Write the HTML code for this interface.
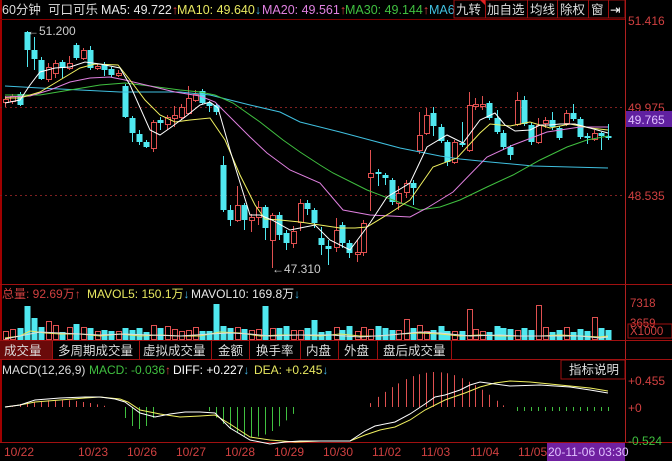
<!DOCTYPE html><html><head><meta charset="utf-8"><style>
body{margin:0;background:#000;width:672px;height:461px;overflow:hidden;font-family:"Liberation Sans","Noto Sans CJK SC",sans-serif}
svg{position:absolute;left:0;top:0}
</style></head><body>
<svg id="s" width="672" height="461" xmlns="http://www.w3.org/2000/svg" font-family="Liberation Sans, Noto Sans CJK SC, sans-serif">
<rect width="672" height="461" fill="#000"/>
<line x1="1" y1="0" x2="1" y2="443" stroke="#a00000" stroke-width="2"/>
<line x1="625.5" y1="0" x2="625.5" y2="443" stroke="#b02020"/>
<line x1="0" y1="19.5" x2="625" y2="19.5" stroke="#800000"/>
<line x1="0" y1="284.5" x2="672" y2="284.5" stroke="#a01010"/>
<line x1="0" y1="340.5" x2="672" y2="340.5" stroke="#a01010"/>
<line x1="0" y1="359.5" x2="672" y2="359.5" stroke="#a01010"/>
<line x1="0" y1="442.5" x2="672" y2="442.5" stroke="#a01010"/>
<line x1="0" y1="107.5" x2="625" y2="107.5" stroke="#802020" stroke-dasharray="2,3"/>
<line x1="0" y1="195.5" x2="625" y2="195.5" stroke="#802020" stroke-dasharray="2,3"/>
<g id="g"></g>
<text x="2" y="14" font-size="12.5" fill="#ddd">60分钟</text>
<text x="48" y="14" font-size="12.5" fill="#ddd">可口可乐</text>
<text x="101" y="14" font-size="12.5" fill="#e8e8e8">MA5: 49.722<tspan fill="#e04040">↑</tspan></text>
<text x="177" y="14" font-size="12.5" fill="#e8e860">MA10: 49.640<tspan fill="#40b0e0">↓</tspan></text>
<text x="262" y="14" font-size="12.5" fill="#e080e0">MA20: 49.561<tspan fill="#e04040">↑</tspan></text>
<text x="345" y="14" font-size="12.5" fill="#40c040">MA30: 49.144<tspan fill="#e04040">↑</tspan></text>
<text x="429" y="14" font-size="12.5" fill="#40c0e0">MA60</text>
<rect x="454" y="0" width="171" height="18" fill="#000" stroke="#a01010"/>
<g font-size="12.5" fill="#ddd">
<text x="456" y="14">九转</text><text x="487" y="14">加自选</text><text x="530" y="14">均线</text><text x="560" y="14">除权</text><text x="591" y="14">窗</text><text x="610" y="14" fill="#fff">⇥</text></g>
<polygon points="480,0 486,0 486,6" fill="#e02020"/>
<g stroke="#a01010"><line x1="485.5" y1="0" x2="485.5" y2="18"/><line x1="527.5" y1="0" x2="527.5" y2="18"/><line x1="557.5" y1="0" x2="557.5" y2="18"/><line x1="588.5" y1="0" x2="588.5" y2="18"/><line x1="608.5" y1="0" x2="608.5" y2="18"/></g>
<g font-size="12" fill="#d04040"><text x="628" y="25">51.416</text><text x="628" y="112">49.975</text><text x="628" y="200">48.535</text></g>
<rect x="626" y="111" width="46" height="16" fill="#6020a0"/>
<text x="628" y="124" font-size="12" fill="#e0c0ff">49.765</text>
<text x="27" y="35" font-size="12" fill="#ccc">←51.200</text>
<text x="272" y="273" font-size="12" fill="#ccc">←47.310</text>
<text x="2" y="298" font-size="12" fill="#d04040">总量: 92.69万<tspan>↑</tspan></text>
<text x="87" y="298" font-size="12" fill="#e8e860">MAVOL5: 150.1万<tspan fill="#40b0e0">↓</tspan></text>
<text x="191" y="298" font-size="12" fill="#e8e8e8">MAVOL10: 169.8万<tspan fill="#40b0e0">↓</tspan></text>
<g font-size="11.5" fill="#d04040"><text x="630" y="307">7318</text><text x="630" y="327">3659</text></g>
<rect x="628" y="324" width="44" height="14" fill="none" stroke="#a01010"/>
<text x="630" y="335" font-size="11.5" fill="#d04040">X1000</text>
<rect x="0" y="341" width="52" height="18" fill="#6a0a0a"/>
<g font-size="12.5" fill="#ddd"><text x="4" y="355">成交量</text><text x="58" y="355">多周期成交量</text><text x="143" y="355">虚拟成交量</text><text x="218" y="355">金额</text><text x="256" y="355">换手率</text><text x="306" y="355">内盘</text><text x="344" y="355">外盘</text><text x="383" y="355">盘后成交量</text></g>
<g stroke="#a01010"><line x1="52.5" y1="341" x2="52.5" y2="359"/><line x1="139.5" y1="341" x2="139.5" y2="359"/><line x1="211.5" y1="341" x2="211.5" y2="359"/><line x1="249.5" y1="341" x2="249.5" y2="359"/><line x1="300.5" y1="341" x2="300.5" y2="359"/><line x1="338.5" y1="341" x2="338.5" y2="359"/><line x1="377.5" y1="341" x2="377.5" y2="359"/><line x1="451.5" y1="341" x2="451.5" y2="359"/></g>
<text x="2" y="374" font-size="12" fill="#ddd">MACD(12,26,9)</text>
<text x="89" y="374" font-size="12" fill="#40c040">MACD: -0.036<tspan fill="#e04040">↑</tspan></text>
<text x="173" y="374" font-size="12" fill="#fff">DIFF: +0.227<tspan fill="#40b0e0">↓</tspan></text>
<text x="254" y="374" font-size="12" fill="#e8e860">DEA: +0.245<tspan fill="#40b0e0">↓</tspan></text>
<rect x="561" y="360" width="64" height="19" fill="#000" stroke="#a01010"/>
<text x="569" y="374" font-size="12.5" fill="#ddd">指标说明</text>
<g font-size="12" fill="#d04040"><text x="628" y="385">+0.455</text><text x="628" y="412">+0</text></g>
<text x="628" y="445" font-size="12" fill="#40c040">-0.524</text>
<g font-size="12" fill="#d04040"><text x="4" y="456">10/22</text><text x="78" y="456">10/23</text><text x="127" y="456">10/26</text><text x="176" y="456">10/27</text><text x="225" y="456">10/28</text><text x="274" y="456">10/29</text><text x="323" y="456">10/30</text><text x="372" y="456">11/02</text><text x="421" y="456">11/03</text><text x="470" y="456">11/04</text><text x="518" y="456">11/05</text></g>
<rect x="547" y="443" width="78" height="18" fill="#7020a0"/>
<text x="548" y="456" font-size="12" fill="#e0c0ff">20-11-06 03:30</text>
</svg>
<script>
var C=[[5,99,102,96,107,'r'],[12,96,101,94,104,'r'],[20,94,105,92,106,'c'],[27,32,50,31,67,'c'],[34,50,59,37,70,'c'],[41,60,79,57,80,'c'],[48,67,79,63,82,'r'],[55,63,73,60,78,'r'],[62,62,68,60,78,'c'],[69,63,68,56,70,'r'],[76,45,58,43,60,'c'],[83,50,58,48,60,'r'],[90,50,68,46,70,'c'],[97,66,68,64,70,'r'],[104,65,70,62,76,'c'],[111,69,75,67,77,'c'],[118,73,75,70,77,'r'],[125,86,117,84,118,'c'],[132,118,133,116,142,'c'],[139,134,142,130,145,'c'],[146,142,147,140,148,'c'],[153,122,148,120,152,'r'],[160,120,123,117,130,'c'],[167,117,124,115,130,'r'],[174,115,118,106,127,'r'],[181,107,117,104,120,'r'],[188,98,113,86,115,'r'],[195,94,100,90,102,'r'],[202,91,103,89,104,'c'],[209,103,106,101,112,'c'],[216,105,112,103,115,'c'],[223,165,210,156,212,'c'],[230,210,220,205,226,'c'],[237,205,220,186,222,'r'],[244,205,220,203,230,'c'],[251,217,220,214,232,'r'],[258,207,217,201,225,'r'],[265,207,228,205,240,'c'],[272,215,240,213,268,'r'],[279,215,235,212,240,'c'],[286,233,243,230,250,'c'],[293,231,243,226,248,'r'],[300,203,222,199,231,'r'],[307,203,209,200,215,'c'],[314,210,223,208,228,'c'],[321,238,245,227,255,'c'],[328,246,249,240,265,'c'],[336,230,247,218,252,'r'],[342,225,243,222,248,'c'],[349,243,253,240,258,'c'],[357,252,254,240,262,'r'],[363,223,252,220,256,'r'],[370,173,177,150,211,'r'],[378,172,174,169,186,'c'],[385,175,178,173,185,'c'],[392,180,202,178,205,'c'],[398,193,203,186,210,'r'],[406,183,192,180,198,'r'],[413,183,188,180,205,'c'],[419,135,150,112,154,'r'],[426,115,133,108,135,'r'],[433,113,126,107,136,'c'],[441,127,141,124,143,'c'],[447,142,162,140,166,'c'],[454,142,162,140,164,'r'],[462,143,145,122,147,'c'],[469,105,150,92,152,'r'],[475,104,106,98,110,'r'],[482,104,106,96,110,'r'],[489,103,118,101,120,'c'],[497,118,132,110,134,'c'],[503,133,147,130,150,'c'],[510,147,155,145,160,'c'],[517,100,124,92,126,'r'],[524,100,124,96,126,'c'],[531,125,142,123,145,'c'],[538,125,142,118,144,'r'],[545,120,123,117,128,'r'],[552,120,127,112,130,'c'],[559,128,138,126,140,'c'],[566,113,123,110,126,'r'],[573,113,119,104,121,'c'],[580,119,137,117,139,'c'],[587,136,138,133,144,'c'],[594,133,139,130,141,'r'],[601,133,136,132,150,'c'],[608,136,138,124,140,'c']];
var VH=[8,10,12,34,22,13,18,14,8,12,16,12,12,8,10,9,8,12,10,12,8,14,12,13,10,8,9,12,9,9,36,14,12,12,11,9,10,34,11,12,14,9,9,12,20,8,9,12,10,14,8,12,10,14,12,10,9,20,12,14,8,10,14,9,8,9,30,10,8,8,14,12,11,9,12,10,34,12,8,10,12,8,11,9,22,12,10,8,6,10,14];
var s='',R='#e05050',Cy='#50e8f0';
C.forEach(function(c,i){var x=c[0],col=c[5]=='r'?R:Cy;
s+='<line x1="'+(x+.5)+'" y1="'+c[3]+'" x2="'+(x+.5)+'" y2="'+c[4]+'" stroke="'+col+'"/>';
var h=Math.max(1,c[2]-c[1]);
if(c[5]=='r')s+='<rect x="'+(x-2)+'.5" y="'+c[1]+'.5" width="5" height="'+h+'" fill="#000" stroke="'+col+'"/>';
else s+='<rect x="'+(x-2.5)+'" y="'+c[1]+'" width="6" height="'+h+'" fill="'+col+'"/>';
var v=VH[i%VH.length];
if(c[5]=='r')s+='<rect x="'+(x-2)+'.5" y="'+(339.5-v)+'" width="5" height="'+v+'" fill="none" stroke="'+col+'"/>';
else s+='<rect x="'+(x-2.5)+'" y="'+(340-v)+'" width="6" height="'+v+'" fill="'+col+'"/>';
var m=0;
if(x<110){m=-Math.max(0,Math.sin((x-5)/105*Math.PI))*7;}
else if(x>118&&x<160){m=Math.sin((x-118)/42*Math.PI)*22;}
else if(x>205&&x<300){m=Math.sin((x-205)/95*Math.PI)*30;}
else if(x>365&&x<505){m=-Math.sin((x-365)/140*Math.PI)*35;}
else if(x>515){m=4;}
if(m)s+='<line x1="'+(x+.5)+'" y1="407" x2="'+(x+.5)+'" y2="'+(407+m)+'" stroke="'+(m<0?'#e05050':'#40c040')+'"/>';
});
function pl(p,c){return '<polyline fill="none" stroke="'+c+'" points="'+p+'"/>';}
s+=pl('5,86 40,88 80,90 120,92 150,92 180,92 210,95 230,100 250,105 280,112 300,122 340,132 370,140 400,148 420,152 440,156 460,159 490,162 533,166 570,167 608,168','#40c0e0');
s+=pl('5,95 40,95 70,90 100,85 125,83 150,86 180,90 200,92 215,95 233,103 260,122 283,140 300,152 320,165 333,173 367,190 393,200 420,210 440,207 460,200 487,187 513,175 540,160 567,147 587,140 608,136','#40c040');
s+=pl('5,97 30,96 50,90 70,82 90,78 110,77 125,80 150,86 175,92 200,96 215,102 233,120 250,137 267,153 290,170 320,183 343,210 370,215 410,217 427,208 453,192 487,157 513,145 547,132 580,127 608,127','#e080e0');
s+=pl('5,98 20,98 40,92 60,80 80,68 95,64 118,65 130,80 145,100 160,115 175,122 190,120 210,118 225,140 240,175 255,205 265,219 280,220 300,222 320,225 340,228 355,228 367,227 390,213 410,200 433,167 457,158 480,133 490,124 510,126 530,122 550,128 570,124 590,128 608,130','#f0f060');
s+=pl('5,103 20,100 30,85 40,72 55,68 70,67 85,62 100,64 120,68 130,85 150,130 160,135 170,128 185,117 200,105 210,102 218,108 230,150 250,215 260,215 272,220 290,230 300,228 315,225 330,240 350,250 370,223 387,197 410,183 427,147 447,135 463,143 480,120 495,113 505,125 515,131 530,130 540,125 550,125 560,124 575,124 590,128 608,133','#fff');
s+=pl('5,338 20,336 30,331 45,333 60,334 80,334 100,336 120,334 140,336 160,335 180,336 200,336 220,332 240,333 260,336 280,335 300,335 320,336 340,334 360,336 380,336 400,334 420,333 440,334 460,336 480,335 500,336 520,336 540,336 560,335 580,336 600,337 608,336','#e8e860');
s+=pl('5,339 25,335 40,332 60,333 80,334 100,335 125,334 150,335 180,336 210,334 230,333 250,334 270,336 300,335 330,335 360,337 390,335 420,332 440,333 470,336 500,335 520,336 540,336 560,336 580,336 600,338 608,337','#ddd');
s+=pl('5,407 20,405 35,402 60,400 85,398 100,397 120,399 128,402 140,410 160,414 180,417 200,416 215,415 230,424 250,437 270,440 295,442 320,441 350,441 365,435 380,430 395,427 410,420 425,410 445,400 465,393 480,387 495,383 510,381 530,382 560,385 590,388 608,391','#f0f060');
s+=pl('5,407 20,405 35,400 60,398 85,397 100,397 115,399 125,402 140,413 155,417 170,414 185,412 200,412 215,413 230,428 250,440 270,444 285,442 300,441 330,441 350,441 365,431 375,426 395,422 410,414 425,404 435,397 445,395 460,390 470,385 480,382 495,384 510,386 540,385 570,387 590,390 608,393','#fff');
document.getElementById('g').innerHTML=s;
</script>
</body></html>
